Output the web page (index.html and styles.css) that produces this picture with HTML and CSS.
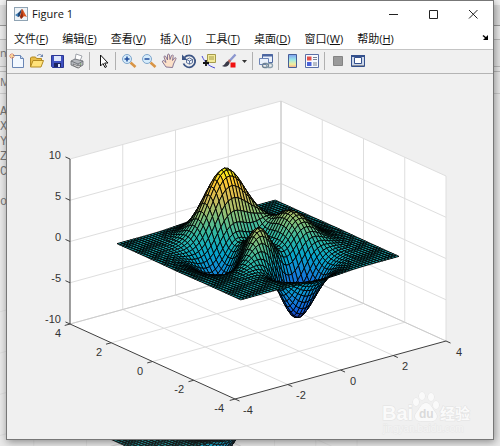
FILE: index.html
```html
<!DOCTYPE html>
<html lang="zh-CN">
<head>
    <meta charset="UTF-8">
    <meta name="viewport" content="width=device-width, initial-scale=1.0">
    <title>Figure 1</title>
    <link rel="stylesheet" href="styles.css">
</head>
<body>
    <div class="desktop" aria-hidden="true">
        <div class="desk-title"></div>
        <div class="desk-menu"></div>
        <div class="desk-tools">ne</div>
        <div class="desk-line"></div>
        <div class="desk-head">M</div>
        <div class="desk-code">
            <div>A</div>
            <div>X</div>
            <div>Y</div>
            <div>Z</div>
            <div>C</div>
            <div></div>
            <div>o</div>
        </div>
        <svg class="desk-plot" viewBox="0 0 500 446">
            <g transform="translate(-89 158)">
                <use href="#grid"/>
                <use href="#surface"/>
            </g>
        </svg>
    </div>

    <div class="window">
        <header class="titlebar">
            <svg class="logo" viewBox="0 0 14 14">
                <rect x=".5" y=".5" width="13" height="13" fill="#eef3f7" stroke="#8fa3b3"/>
                <path d="M1 8l3-2 2 2-2 2z" fill="#3f7fb5"/>
                <path d="M4 6c2-1 2-3 4-4L6 9 4 10z" fill="#234a78"/>
                <path d="M8 2c1 0 3 5 5 8-2-1-3-1-4 0l-2 2c0-2-1-3-2-2 2-2 2-6 3-8z" fill="#d9541e"/>
                <path d="M8 2c-.5 3-.5 6-2 8l1 2 2-2z" fill="#8d2a12"/>
            </svg>
            <h1>Figure 1</h1>
            <button type="button" class="win-btn" aria-label="最小化">
                <svg viewBox="0 0 10 10"><path d="M1 5.5h9"/></svg>
            </button>
            <button type="button" class="win-btn" aria-label="最大化">
                <svg viewBox="0 0 10 10"><path d="M1.5 1.5h8v8h-8z"/></svg>
            </button>
            <button type="button" class="win-btn" aria-label="关闭">
                <svg viewBox="0 0 10 10"><path d="M1 1l8.500 8.500M9.500 1L1 9.500"/></svg>
            </button>
        </header>

        <nav class="menubar">
            <button type="button">文件(<u>F</u>)</button>
            <button type="button">编辑(<u>E</u>)</button>
            <button type="button">查看(<u>V</u>)</button>
            <button type="button">插入(<u>I</u>)</button>
            <button type="button">工具(<u>T</u>)</button>
            <button type="button">桌面(<u>D</u>)</button>
            <button type="button">窗口(<u>W</u>)</button>
            <button type="button">帮助(<u>H</u>)</button>
            <button type="button" class="dock" aria-label="停靠">
                <svg viewBox="0 0 7 7"><path d="M1 1.5L4 4" stroke="#000" stroke-width="1.5"/><path d="M6 1v5H1z"/></svg>
            </button>
        </nav>

        <div class="toolbar">
            <button type="button" aria-label="新建">
                <svg viewBox="0 0 16 16">
                    <path d="M3.5 2.5h8l3 3v9h-11z" fill="#f2f8ff" stroke="#6a86b4"/>
                    <path d="M11.5 2.5v3h3" fill="#c9dcf3" stroke="#6a86b4"/>
                    <path d="M3 0v6M0 3h6M1 1l4 4M5 1L1 5" stroke="#e07a4a" stroke-width=".8"/>
                    <circle cx="3" cy="3" r="1.2" fill="#ffd58a"/>
                </svg>
            </button>
            <button type="button" aria-label="打开">
                <svg viewBox="0 0 16 16">
                    <path d="M1.5 14V5l1-1h4l1 1.5h5V8" fill="#e8bd48" stroke="#b38a22"/>
                    <path d="M1.5 14L4 7.5h10.5L12 14z" fill="#ffe27a" stroke="#b38a22"/>
                    <path d="M8 3c2-2 4-2 5 0" fill="none" stroke="#6f86b0"/>
                    <path d="M14 1v3h-3z" fill="#6f86b0"/>
                </svg>
            </button>
            <button type="button" aria-label="保存">
                <svg viewBox="0 0 16 16">
                    <path d="M2.5 2.5h12v12h-11l-1-1z" fill="#3f51c0" stroke="#2b3794"/>
                    <path d="M5 3h7v5H5z" fill="#dfe7fb"/>
                    <path d="M5 10h7v4H5z" fill="#1c245f"/>
                    <path d="M9 11h2v3H9z" fill="#dfe7fb"/>
                </svg>
            </button>
            <button type="button" aria-label="打印">
                <svg viewBox="0 0 16 16">
                    <path d="M6 7l1-6 6 2-2 5z" fill="#fff" stroke="#8a8f98" stroke-width=".8"/>
                    <path d="M2 8l4-2 8 2v4l-5 3-7-3z" fill="#b5b8bd" stroke="#666a70" stroke-width=".8"/>
                    <path d="M2 8l7 3 5-3M9 11v4" fill="none" stroke="#666a70" stroke-width=".8"/>
                    <path d="M4 11l5 2 3-1-2 3-5-2z" fill="#f4f4f4" stroke="#555" stroke-width=".6"/>
                    <path d="M11 11h1" stroke="#6ab04c"/>
                </svg>
            </button>
            <span class="sep"></span>
            <button type="button" aria-label="编辑绘图">
                <svg viewBox="0 0 16 16">
                    <path d="M5.5 2v11l2.500-2.500 2 4 1.500-.8-1.800-3.700H13z" fill="#fff" stroke="#111"/>
                </svg>
            </button>
            <span class="sep"></span>
            <button type="button" aria-label="放大">
                <svg viewBox="0 0 16 16">
                    <path d="M9.5 9.5l5 4.500" stroke="#d89445" stroke-width="2.6"/>
                    <circle cx="6" cy="6" r="4.5" fill="#d6ecfb" stroke="#7fa6cc"/>
                    <path d="M3.5 6h5M6 3.5v5" stroke="#1f4b9b" stroke-width="1.5"/>
                </svg>
            </button>
            <button type="button" aria-label="缩小">
                <svg viewBox="0 0 16 16">
                    <path d="M9.5 9.5l5 4.500" stroke="#d89445" stroke-width="2.6"/>
                    <circle cx="6" cy="6" r="4.5" fill="#d6ecfb" stroke="#7fa6cc"/>
                    <path d="M3.5 6h5" stroke="#1f4b9b" stroke-width="1.5"/>
                </svg>
            </button>
            <button type="button" aria-label="平移">
                <svg viewBox="0 0 16 16">
                    <path d="M5 14L1.500 9c-.5-1.500 1-2 2-.8L5 9.500 3 4c0-1.500 1.500-1.500 2 0l1.500 3L6.500 2c.3-1.300 1.700-1.200 2 0L9 6.500l1.500-4c.8-1 2-.5 1.700.8L11.500 7.500l2-2.500c1-.8 2 0 1.300 1.200L12.500 11l-1 3.500z" fill="#fbe0c8" stroke="#7c6a8c" stroke-width=".9"/>
                </svg>
            </button>
            <button type="button" aria-label="三维旋转">
                <svg viewBox="0 0 16 16">
                    <path d="M3.5 4.5a6 6 0 1 1-1 6" fill="none" stroke="#3c5585" stroke-width="1.8"/>
                    <path d="M1 1.5v5.500h5.500z" fill="#3c5585"/>
                    <path d="M8.5 5l3 1.500v3.200l-3 1.500-3-1.500V6.500zM5.500 6.500l3 1.500 3-1.500M8.500 8v3" fill="#eef3fb" stroke="#3c5585" stroke-width=".8"/>
                </svg>
            </button>
            <button type="button" aria-label="数据游标">
                <svg viewBox="0 0 16 16">
                    <path d="M1 3c3 7 7 10 13 12" fill="none" stroke="#4a4ad0"/>
                    <path d="M6.5 1.5h8v8h-6l-2-1z" fill="#f3eb9a" stroke="#a59a4c"/>
                    <path d="M8 4h5M8 6h5" stroke="#a59a4c"/>
                    <path d="M5 7v6M2 10h6" stroke="#111" stroke-width="1.8"/>
                </svg>
            </button>
            <button type="button" aria-label="刷亮">
                <svg viewBox="0 0 16 16">
                    <path d="M14.5 1.5L8 8.5" stroke="#8c97cf" stroke-width="2.4"/>
                    <path d="M9 7L7 10" stroke="#c06a5a" stroke-width="2.4"/>
                    <path d="M7.5 8.5c-3-1-3 4-6.500 4.500 3 1.500 7 .5 7.500-3z" fill="#3a3a48"/>
                    <path d="M9.5 9.5h5v5h-5z" fill="#f01010"/>
                </svg>
            </button>
            <button type="button" class="caret" aria-label="刷亮选项">
                <svg viewBox="0 0 5 3"><path d="M0 0h5L2.500 3z" fill="#333"/></svg>
            </button>
            <span class="sep"></span>
            <button type="button" aria-label="链接绘图">
                <svg viewBox="0 0 16 16">
                    <path d="M4.5 1.5h10v8h-10z" fill="#eaf1fb" stroke="#4c66a0"/>
                    <path d="M4 2.5h11" stroke="#4c66a0" stroke-width="2"/>
                    <path d="M1.5 5.5h9v6h-9z" fill="#eaf1fb" stroke="#6b83b5"/>
                    <rect x="4.5" y="10.5" width="6" height="4" rx="2" fill="none" stroke="#6d8191" stroke-width="1.3"/>
                    <rect x="8.5" y="10.5" width="6" height="4" rx="2" fill="none" stroke="#8ba0ae" stroke-width="1.3"/>
                </svg>
            </button>
            <span class="sep"></span>
            <button type="button" aria-label="插入颜色栏">
                <svg viewBox="0 0 16 16">
                    <defs>
                        <linearGradient id="bar" x2="0" y2="1">
                            <stop offset="0" stop-color="#7f9df0"/>
                            <stop offset=".4" stop-color="#9be8e8"/>
                            <stop offset=".75" stop-color="#f3ee9c"/>
                            <stop offset="1" stop-color="#f0a890"/>
                        </linearGradient>
                    </defs>
                    <path d="M4.5 1.5h8v13h-8z" fill="url(#bar)" stroke="#465f97"/>
                </svg>
            </button>
            <button type="button" aria-label="插入图例">
                <svg viewBox="0 0 16 16">
                    <path d="M1.5 1.5h13v13h-13z" fill="#f6f9ff" stroke="#5a6fa5"/>
                    <path d="M3 3.5h4.500v4H3z" fill="#e0504a"/>
                    <path d="M3 9h4.500v4H3z" fill="#4a62d8"/>
                    <path d="M9 4.5h4M9 6.5h4M9 10h4M9 12h4" stroke="#7a8290"/>
                </svg>
            </button>
            <span class="sep"></span>
            <button type="button" aria-label="隐藏绘图工具" disabled>
                <svg viewBox="0 0 16 16"><path d="M3.5 3.5h9v9h-9z" fill="#9a9a9a" stroke="#848484"/></svg>
            </button>
            <button type="button" aria-label="显示绘图工具">
                <svg viewBox="0 0 16 16">
                    <path d="M1.5 2.5h13v11h-13z" fill="#cdd8ea" stroke="#34508c"/>
                    <path d="M1 3h14" stroke="#34508c" stroke-width="2"/>
                    <path d="M4.5 4.5h7v6h-7z" fill="#fff" stroke="#34508c"/>
                    <path d="M2 12.5h12" stroke="#8a8f99"/>
                </svg>
            </button>
        </div>

        <main class="figure">
            <svg class="plot" viewBox="7 74 486 365" role="img" aria-label="peaks">
                <path class="walls" d="M70 159L281 101L446 176V341L235 399L70 324z"/>
                <g id="grid">
                    <path class="grid-lines" id="gridLines"/>
                    <path class="box-lines" d="M70 324L281 266L446 341M281 266V101"/>
                </g>
                <path class="axis-lines" id="axisLines" d="M70 159V324L235 399L446 341"/>
                <g id="surface"></g>
                <g class="ticks end">
                    <text x="61" y="159">10</text>
                    <text x="61" y="200">5</text>
                    <text x="61" y="241">0</text>
                    <text x="61" y="282">-5</text>
                    <text x="61" y="323">-10</text>
                    <text x="61" y="337">4</text>
                    <text x="102" y="356">2</text>
                    <text x="143" y="375">0</text>
                    <text x="184" y="393">-2</text>
                    <text x="224" y="412">-4</text>
                </g>
                <g class="ticks">
                    <text x="243" y="414">-4</text>
                    <text x="296" y="399">-2</text>
                    <text x="350" y="385">0</text>
                    <text x="402" y="370">2</text>
                    <text x="456" y="356">4</text>
                </g>
                <g class="watermark">
                    <text class="wm-big" x="382" y="420">Bai</text>
                    <ellipse cx="416" cy="402" rx="3" ry="4"/>
                    <ellipse cx="422" cy="396" rx="3" ry="4"/>
                    <ellipse cx="431" cy="397" rx="3" ry="4"/>
                    <ellipse cx="436" cy="405" rx="3" ry="4"/>
                    <path d="M426 403c5 0 6 6 10 10 3 6-2 9-6 8h-8c-5 1-9-3-6-8 4-4 5-10 10-10z"/>
                    <text class="wm-du" x="419" y="418">du</text>
                    <text class="wm-cjk" x="440" y="419">经验</text>
                    <text class="wm-url" x="383" y="432">jingyan.baidu.com</text>
                </g>
            </svg>
        </main>
    </div>

    <script src="plot.js"></script>
</body>
</html>
```

FILE: styles.css
```css
* {
    box-sizing: border-box;
}

body {
    margin: 0;
    min-height: 100vh;
    padding: 0 6px 6px;
    display: flex;
    background-color: #e9e9e9;
    font-family: "Open Sans", "Noto Sans CJK SC", sans-serif;
    font-size: 11px;
    color: #111;
    overflow: hidden;
}

button {
    padding: 0;
    border: none;
    background: none;
    font: inherit;
    color: inherit;
}

svg {
    display: block;
}

/* MATLAB desktop behind the figure window */
.desktop {
    position: absolute;
    inset: 0;
    overflow: hidden;
    color: #777;
}

.desk-title {
    height: 26px;
    background-color: #dedede;
    border-top: 5px solid #f2f2f2;
    border-bottom: 1px solid #999;
}

.desk-menu {
    height: 14px;
    background-color: #ececec;
    border-bottom: 1px solid #bbb;
}

.desk-tools {
    height: 27px;
    padding-top: 5px;
    background-color: #e4e4e4;
    border-bottom: 1px solid #bbb;
}

.desk-line {
    height: 5px;
    border-bottom: 1px solid #bbb;
}

.desk-head {
    height: 22px;
    line-height: 20px;
    border-bottom: 1px solid #ccc;
}

.desk-code {
    padding-top: 11px;
    font-family: "Liberation Mono", monospace;
    font-size: 12px;
    line-height: 15px;
}

.desk-code div {
    height: 15px;
}

.desk-plot {
    position: absolute;
    inset: 0;
    width: 100%;
}

/* figure window */
.window {
    position: relative;
    flex: 1;
    display: flex;
    flex-direction: column;
    background-color: #fff;
    border: 1px solid #777;
    box-shadow: 1px 2px 8px rgba(0, 0, 0, 0.4);
}

.titlebar {
    display: flex;
    align-items: center;
    height: 25px;
    padding-left: 7px;
}

.titlebar h1 {
    flex: 1;
    margin: 0 0 0 4px;
    font-size: 11px;
    font-weight: normal;
}

.logo {
    width: 14px;
    height: 14px;
}

.win-btn {
    width: 40px;
    height: 25px;
    display: flex;
    justify-content: center;
    align-items: center;
}

.win-btn svg {
    width: 10px;
    height: 10px;
    fill: none;
    stroke: #222;
}

.menubar {
    display: flex;
    align-items: center;
    gap: 14px;
    height: 23px;
    padding: 0 4px 0 7px;
}

.dock {
    margin-left: auto;
}

.dock svg {
    width: 7px;
    height: 7px;
}

.toolbar {
    display: flex;
    align-items: center;
    height: 25px;
    padding: 0 0 1px;
    background-color: #f0f0f0;
    border-top: 1px solid #c4c4c4;
    border-bottom: 1px solid #b4b4b4;
}

.toolbar button {
    width: 20px;
    display: flex;
    justify-content: center;
}

.toolbar svg {
    width: 16px;
    height: 16px;
    fill: none;
}

.toolbar .caret {
    width: 11px;
}

.toolbar .caret svg {
    width: 5px;
    height: 3px;
}

.sep {
    width: 1px;
    height: 18px;
    margin: 0 3px 0 2px;
    background-color: #b0b0b0;
}

/* axes */
.figure {
    flex: 1;
    background-color: #f0f0f0;
}

.plot {
    width: 100%;
}

.walls {
    fill: #fff;
}

.grid-lines {
    fill: none;
    stroke: #dedede;
}

.box-lines {
    fill: none;
    stroke: #ccc;
}

.axis-lines {
    fill: none;
    stroke: #404040;
}

.desk-plot use {
    opacity: 0.9;
}

#surface {
    stroke: #000;
    stroke-width: 0.9px;
    stroke-linejoin: round;
}

.ticks {
    font-family: "Liberation Sans", sans-serif;
    font-size: 11px;
    fill: #333;
}

.end {
    text-anchor: end;
}

.watermark {
    font-family: "Liberation Sans", "Noto Sans CJK SC", sans-serif;
    font-weight: bold;
    fill: #fafafa;
    stroke: #e2e2e2;
    stroke-width: 1px;
    paint-order: stroke;
}

.wm-big {
    font-size: 20px;
}

.wm-du {
    font-size: 12px;
    fill: #dadada;
    stroke: none;
}

.wm-cjk {
    font-size: 15px;
}

.wm-url {
    font-size: 10px;
    font-weight: normal;
    fill: #f4f4f4;
    stroke: #e8e8e8;
}
```

FILE: plot.js
```js
// Orthographic projection of the axes box: x, y in [-4, 4], z in [-10, 10]
function project(x, y, z) {
    const px = 235 + (x + 4) * 211 / 8 - (y + 4) * 165 / 8;
    const py = 399 - (x + 4) * 58 / 8 - (y + 4) * 75 / 8 - (z + 10) * 8.25;
    return px.toFixed(2) + ' ' + py.toFixed(2);
}

function line(a, b) {
    return 'M' + project(...a) + 'L' + project(...b);
}

function peaks(x, y) {
    return 3 * (1 - x) ** 2 * Math.exp(-x * x - (y + 1) ** 2)
        - 10 * (x / 5 - x ** 3 - y ** 5) * Math.exp(-x * x - y * y)
        - Math.exp(-((x + 1) ** 2) - y * y) / 3;
}

const parula = [
    [53, 42, 135], [15, 92, 221], [20, 129, 214], [6, 164, 202], [46, 183, 164],
    [135, 191, 119], [209, 187, 89], [254, 200, 50], [249, 251, 14]
];

function color(z) {
    const t = Math.max(0, Math.min(1, (z + 6.55) / 14.63)) * (parula.length - 1);
    const i = Math.min(Math.floor(t), parula.length - 2);
    const rgb = parula[i].map((c, k) => Math.round(c + (parula[i + 1][k] - c) * (t - i)));
    return 'rgb(' + rgb.join(',') + ')';
}

// Grid lines on the floor and the two back walls
let grid = '';
for (const v of [-2, 0, 2, 4]) {
    grid += line([v, -4, -10], [v, 4, -10]) + line([v, 4, -10], [v, 4, 10]);
    grid += line([-4, v, -10], [4, v, -10]) + line([4, v, -10], [4, v, 10]);
}
for (const z of [-5, 0, 5, 10]) {
    grid += line([-4, 4, z], [4, 4, z]) + line([4, 4, z], [4, -4, z]);
}
grid += line([4, -4, -10], [4, -4, 10]);
document.getElementById('gridLines').setAttribute('d', grid);

// Tick marks
let ticks = '';
for (const v of [-4, -2, 0, 2, 4]) {
    ticks += line([v, -4, -10], [v, -4.22, -10]);
    ticks += line([-4, v, -10], [-4.2, v, -10]);
}
for (const z of [-10, -5, 0, 5, 10]) {
    ticks += line([-4, 4, z], [-4, 4.22, z]);
}
const axis = document.getElementById('axisLines');
axis.setAttribute('d', axis.getAttribute('d') + ticks);

// Surface, drawn from the far corner to the near one
const n = 48;
const at = i => -3 + 6 * i / n;
let cells = '';
for (let j = n - 1; j >= 0; j--) {
    for (let i = n - 1; i >= 0; i--) {
        const corners = [[i, j], [i + 1, j], [i + 1, j + 1], [i, j + 1]]
            .map(([a, b]) => project(at(a), at(b), peaks(at(a), at(b))));
        cells += '<path d="M' + corners.join('L') + 'z" fill="' + color(peaks(at(i), at(j))) + '"/>';
    }
}
document.getElementById('surface').innerHTML = cells;
```
